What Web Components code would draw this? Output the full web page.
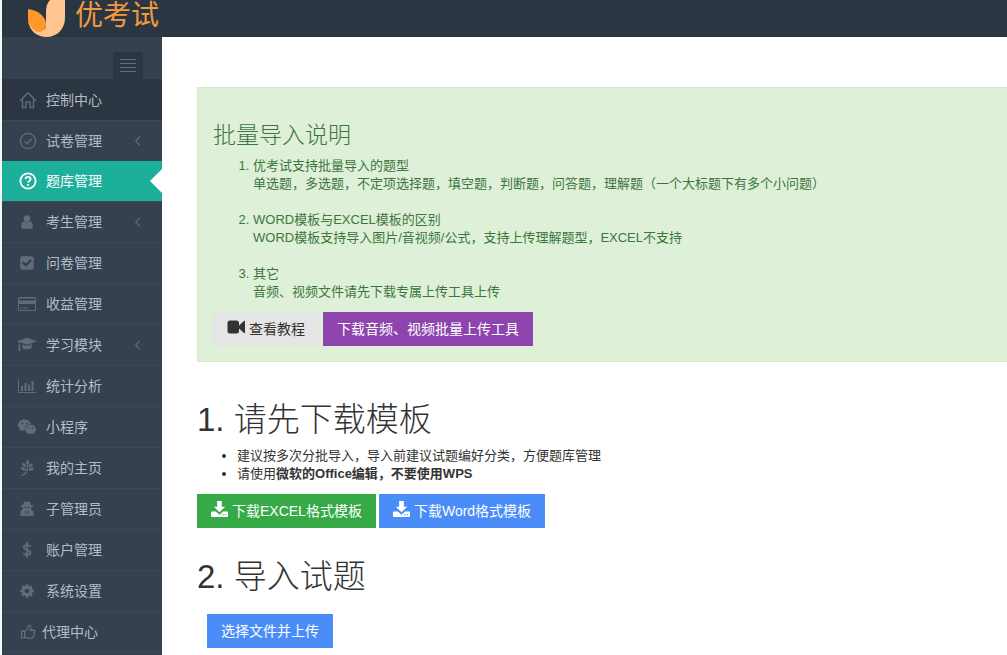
<!DOCTYPE html>
<html lang="zh-CN">
<head>
<meta charset="utf-8">
<meta name="viewport" content="width=device-width, initial-scale=1">
<title>优考试 - 题库管理</title>
<style>
body { margin: 0; font: 13px/18px "Liberation Sans", "Noto Sans CJK SC", sans-serif; color: #333; background: #fff; }
</style>
</head>
<body>
<exam-app></exam-app>
<script>
const fa = d => `<svg viewBox="0 0 1792 1792" fill="currentColor"><path d="${d}"/></svg>`;
const line = (b, w = 1) => `<svg viewBox="0 0 18 18" fill="none" stroke="currentColor" stroke-width="${w}">${b}</svg>`;
const solid = b => `<svg viewBox="0 0 18 18" fill="currentColor">${b}</svg>`;
const ICONS = {
  home: line('<path d="M1 10 9 1.800l8 8.200M3.500 8.500v8h3.500V11h4v5.500h3.500v-8"/>', 1.4),
  check: line('<circle cx="9" cy="9" r="7.600"/><path d="m5.500 9.300 2.700 2.500 4.500-5"/>', 1.4),
  question: line('<circle cx="9" cy="9" r="7.600"/><path d="M6.500 7.200C6.700 5.500 7.700 4.900 9 4.900c1.500 0 2.600.8 2.600 2.100 0 1.900-2.500 1.900-2.500 3.700M9.100 11.900v1.800"/>', 1.8),
  user: fa("M1536 1399q0 109-62.5 187t-150.5 78h-854q-88 0-150.5-78t-62.5-187q0-85 8.5-160.5t31.5-152 58.5-131 94-89 134.5-34.5q131 128 313 128t313-128q76 0 134.5 34.5t94 89 58.500 131 31.5 152 8.5 160.5zm-256-887q0 159-112.5 271.500t-271.5 112.5-271.5-112.5-112.5-271.5 112.5-271.5 271.5-112.5 271.5 112.5 112.5 271.5z"),
  square: fa("M813 1299l614-614q19-19 19-45t-19-45l-102-102q-19-19-45-19t-45 19l-467 467-211-211q-19-19-45-19t-45 19l-102 102q-19 19-19 45t19 45l358 358q19 19 45 19t45-19zm851-883v960q0 119-84.5 203.5t-203.5 84.5h-960q-119 0-203.5-84.5t-84.5-203.5v-960q0-119 84.5-203.5t203.5-84.5h960q119 0 203.5 84.5t84.5 203.5z"),
  card: solid('<path fill-rule="evenodd" d="M1.500 2h15A1.500 1.500 0 0 1 18 3.500v11a1.500 1.500 0 0 1-1.500 1.500h-15A1.500 1.500 0 0 1 0 14.500v-11A1.500 1.500 0 0 1 1.500 2ZM1 3.500v2h16v-2ZM1 9v6h16V9ZM2.500 12.500h2v1h-2Zm3 0h4v1h-4Z"/>'),
  cap: solid('<path d="M9 1.700 19 5.200 9 8.700 2 6.300v3c.8.500.5 1.200 0 1.400l.7 4.200H.2l.7-4.200c-.6-.4-.6-1 0-1.400V5.900L-1 5.200Z"/><path d="m4.300 8.200 4.700 1.700 4.700-1.700v3.500c-1.400 2.200-8 2.200-9.400 0Z"/>'),
  chart: solid('<path d="M0 2h1v13h17v1H0ZM3 9h2v5H3ZM6.500 6h2v8h-2ZM10 7.500h2V14h-2ZM13.500 4h2v10h-2Z"/>'),
  wechat: solid('<path fill-rule="evenodd" d="M6.600 1.500C2.900 1.500 0 4 0 7c0 1.700.9 3.300 2.400 4.300l-.6 2.200 2.300-1.300c.9.200 1.700.4 2.600.3C6.100 8.900 9 6 12.900 6 12.300 3.500 9.700 1.500 6.600 1.500ZM4.300 4.500a.9.900 0 1 1 0 1.800.9.900 0 0 1 0-1.800Zm4.500 0a.9.900 0 1 1 0 1.800.9.900 0 0 1 0-1.800ZM12.700 6.700C9.700 6.700 7.300 8.800 7.300 11.500s2.400 4.400 5.400 4.400c.7 0 1.300-.1 1.900-.3l1.900 1-.5-1.600c1.200-.9 2-2.100 2-3.500C18 8.800 15.600 6.700 12.700 6.700ZM11 9.300a.7.700 0 1 1 0 1.400.7.700 0 0 1 0-1.400Zm3.500 0a.7.700 0 1 1 0 1.400.7.700 0 0 1 0-1.400Z"/>'),
  leaf: solid('<path d="M9.500 0c2.600 1.500 2.700 4 .2 5.900C6.900 4.400 7.200 1.500 9.500 0ZM3.200 3.500c3.300.1 5 1.700 5.100 4.600-3.200.1-5-1.600-5.100-4.600ZM15.800 3.900c0 3-1.700 4.500-5.200 4.200.1-2.900 1.900-4.200 5.200-4.200ZM1.800 8.500c3.400-.8 5.500.3 6.500 2.900-3 1.300-5.400.3-6.500-2.900ZM16.900 9c-1.300 2.800-3.500 3.700-6.400 2.400C11.700 8.600 13.900 8 16.900 9Z"/><path d="M8.900 5h1.300c.2 6-.5 12-7.700 13v-1.500c6-1.300 6.600-6 6.400-11.500Z"/>'),
  secret: solid('<path fill-rule="evenodd" d="M5.700.7C7 0 8 1.200 9 1.200S11 0 12.300.7L13.400 4.300l2.900.9v1l-2.400.5c.1 1.200-.1 1.900-.7 2.600 2.300.7 3.400 2.700 3.400 5.600 0 1.300-.8 2.100-2 2.100H3.400c-1.200 0-2-.8-2-2.100 0-2.900 1.100-4.900 3.400-5.600-.6-.7-.8-1.400-.7-2.600l-2.400-.5v-1l2.900-.9ZM5.700 7c.2 1.500 2.500 1.500 3.300.3.800 1.200 3.100 1.200 3.300-.3ZM6.400 10.500l1.300 5L8.300 12.300ZM11.600 10.500l-1.900 1.800.6 3.200Z"/>'),
  dollar: line('<path d="M13 5.300c-1-1.100-2.300-1.700-4-1.700C6.900 3.600 5.300 4.500 5.300 6c0 3.600 7.600 2 7.600 5.900 0 1.500-1.500 2.600-3.700 2.600-1.800 0-3.200-.6-4.300-1.800M9 0v18"/>', 2),
  cog: fa("M1152 896q0-106-75-181t-181-75-181 75-75 181 75 181 181 75 181-75 75-181zm512-109v222q0 12-8 23t-20 13l-185 28q-19 54-39 91 35 50 107 138 10 12 10 25t-9 23q-27 37-99 108t-94 71q-12 0-26-9l-138-108q-44 23-91 38-16 136-29 186-7 28-36 28h-222q-14 0-24.5-8.5t-11.5-21.5l-28-184q-49-16-90-37l-141 107q-10 9-25 9-14 0-25-11-126-114-165-168-7-10-7-23 0-12 8-23 15-21 51-66.5t54-70.5q-27-50-41-99l-183-27q-13-2-21-12.5t-8-23.5v-222q0-12 8-23t19-13l186-28q14-46 39-92-40-57-107-138-10-12-10-24 0-10 9-23 26-36 98.5-107.5t94.5-71.5q13 0 26 10l138 107q44-23 91-38 16-136 29-186 7-28 36-28h222q14 0 24.5 8.5t11.5 21.5l28 184q49 16 90 37l142-107q9-9 24-9 13 0 25 10 129 119 165 170 7 8 7 22 0 12-8 23-15 21-51 66.5t-54 70.5q26 50 41 98l183 28q13 2 21 12.5t8 23.5z"),
  like: line('<path d="M1.800 8.200h3.500v7.500H1.800ZM5.300 8.700C7 8 7.200 6 8.700 5c.7-.8.4-3.400 1.300-3.700 1.800 0 2.500 1.500 2.100 3l-.7 2.700h3.800c1.600.1 1.800 1.800.8 2.600.7.900.5 1.800-.3 2.300.3.900 0 1.500-.6 2 .1 1.300-.7 2.300-2 2.300-3.100 0-4.600-.4-7.800-1.200"/>', 1.5),
  back: line('<path d="m11 4-4.500 5 4.500 5"/>', 1.4),
  video: solid('<path d="M3 2.500h6.500A2.500 2.500 0 0 1 12 5v2.500L17 3c.5-.4 1-.2 1 .4v11.200c0 .6-.5.800-1 .4l-5-4.500V13a2.500 2.500 0 0 1-2.500 2.500H3A2.500 2.500 0 0 1 .5 13V5A2.500 2.500 0 0 1 3 2.500Z"/>'),
  download: solid('<path fill-rule="evenodd" d="M6.500 0h5v6H15l-6 6-6-6h3.500ZM.7 11h4.500L9 14.500l3.800-3.500h4.500l.7.700v4.600l-.7.700H.7l-.7-.7v-4.600ZM12 14v1h1.300v-1Zm2.700 0v1H16v-1Z"/>'),
  bars: line('<path d="M1 2.500h16M1 6.500h16M1 10.500h16M1 14.500h16"/>')
};

function define(name, render) {
  customElements.define(name, class extends HTMLElement {
    connectedCallback() {
      if (this.shadowRoot) return;
      const t = document.createElement('template');
      t.innerHTML = render(this);
      this.attachShadow({ mode: 'open' }).append(t.content.cloneNode(true));
    }
  });
}

define('exam-icon', el => `
<style>:host { display: block; flex: none; width: 18px; height: 18px; } svg { display: block; width: 100%; height: 100%; overflow: visible; }</style>
${ICONS[el.getAttribute('name')]}`);

define('exam-header', () => `
<style>
:host { display: block; height: 37px; background: #2b3643; }
a { display: flex; gap: 9px; padding-left: 26px; color: #f19a3e; text-decoration: none; font-size: 28px; line-height: 32px; }
svg { display: block; width: 38px; height: 37px; }
</style>
<a href="#"><svg viewBox="0 0 38 37" aria-hidden="true"><path fill="#ffc490" d="M22 0h15v18C37 29 29 37 18.500 37 10 37 2 32 0 21l16 9c2-2 2-4 2-7V12c0-5 1-9 4-12Z"/><path fill="#ff9829" d="M0 9c10 1 18 8 18 15 0 5-3 8-8 8C4 30 0 24 0 18Z"/></svg><span>优考试</span></a>`);

define('exam-nav-item', el => `
<style>
:host { display: block; border-top: 1px solid #3d4957; }
:host([first]) { border-top-color: #2c3542; background: #2c3542; }
:host([active]) { border-top: 0; background: #1caf9a; }
a { position: relative; display: flex; align-items: center; height: 40px; padding: 0 16px; color: #b4bcc8; font-size: 14px; text-decoration: none; }
.lead { width: 18px; height: 18px; margin-right: 10px; color: #606c7d; }
.lead.wide { margin: 0 9px 0 1px; }
.lead.mid { width: 16px; height: 16px; margin: 0 11px 0 1px; }
:host([tight]) .lead.mid { margin: 0 6px 0 2px; }
.more { width: 16px; height: 16px; margin-left: auto; color: #606c7d; }
:host([active]) a, :host([active]) .lead { color: #fff; }
:host([active]) a::after { content: ""; position: absolute; right: 0; top: 8px; width: 12px; height: 24px; background: #fff; clip-path: polygon(100% 0, 0 50%, 100% 100%); }
</style>
<a href="#"${el.hasAttribute('active') ? ' aria-current="page"' : ''}><exam-icon class="lead ${/^(home|check|question)$/.test(el.getAttribute('icon')) ? 'wide' : /^(card|cap|chart|wechat)$/.test(el.getAttribute('icon')) ? '' : 'mid'}" name="${el.getAttribute('icon')}"></exam-icon><slot></slot>${el.hasAttribute('more') ? '<exam-icon class="more" name="back"></exam-icon>' : ''}</a>`);

define('exam-sidebar', () => `
<style>
:host { display: block; background: #364150; }
.top { display: flex; justify-content: flex-end; padding: 15px 19px 0 0; }
button { display: grid; place-items: center; width: 30px; height: 27px; padding: 0; border: 0; background: #2b3643; color: #606c7d; }
nav { border-bottom: 1px solid #3d4957; }
</style>
<div class="top"><button type="button" aria-label="切换菜单"><exam-icon name="bars"></exam-icon></button></div>
<nav>
<exam-nav-item icon="home" first>控制中心</exam-nav-item>
<exam-nav-item icon="check" more>试卷管理</exam-nav-item>
<exam-nav-item icon="question" active>题库管理</exam-nav-item>
<exam-nav-item icon="user" more>考生管理</exam-nav-item>
<exam-nav-item icon="square">问卷管理</exam-nav-item>
<exam-nav-item icon="card">收益管理</exam-nav-item>
<exam-nav-item icon="cap" more>学习模块</exam-nav-item>
<exam-nav-item icon="chart">统计分析</exam-nav-item>
<exam-nav-item icon="wechat">小程序</exam-nav-item>
<exam-nav-item icon="leaf">我的主页</exam-nav-item>
<exam-nav-item icon="secret">子管理员</exam-nav-item>
<exam-nav-item icon="dollar">账户管理</exam-nav-item>
<exam-nav-item icon="cog">系统设置</exam-nav-item>
<exam-nav-item icon="like" tight>代理中心</exam-nav-item>
</nav>`);

define('exam-button', el => `
<style>
:host { display: block; }
button { display: flex; align-items: center; gap: 4px; height: 34px; padding: 0 14px; border: 0; background: #4b8df8; color: #fff; font: inherit; font-size: 14px; white-space: nowrap; }
:host([kind=gray]) button { background: #e5e5e5; color: #333; }
:host([kind=purple]) button { background: #8e44ad; }
:host([kind=green]) button { background: #35aa47; }
exam-icon { width: 17px; height: 17px; margin-bottom: 4px; }
:host([kind=gray]) exam-icon { width: 18px; height: 18px; }
</style>
<button type="button">${el.hasAttribute('icon') ? `<exam-icon name="${el.getAttribute('icon')}"></exam-icon>` : ''}<span><slot></slot></span></button>`);

define('exam-guide', () => `
<style>
:host { display: block; padding: 35px 15px 15px; border: 1px solid #d6e9c6; border-right: 0; background: #dff0d8; color: #3c763d; }
h3 { margin: 0 0 10px; font-size: 23px; line-height: 24px; font-weight: 300; }
ol { display: grid; gap: 18px; margin: 0 0 11px; padding-left: 40px; }
p { margin: 0; }
.actions { display: flex; gap: 4px; }
</style>
<h3>批量导入说明</h3>
<ol>
<li>优考试支持批量导入的题型<p>单选题，多选题，不定项选择题，填空题，判断题，问答题，理解题（一个大标题下有多个小问题）</p></li>
<li>WORD模板与EXCEL模板的区别<p>WORD模板支持导入图片/音视频/公式，支持上传理解题型，EXCEL不支持</p></li>
<li>其它<p>音频、视频文件请先下载专属上传工具上传</p></li>
</ol>
<div class="actions"><exam-button kind="gray" icon="video">查看教程</exam-button><exam-button kind="purple">下载音频、视频批量上传工具</exam-button></div>`);

define('exam-step', el => `
<style>
:host { display: block; }
h1 { margin: 0 0 9px; font-size: 33px; line-height: 36px; font-weight: 300; }
</style>
<h1>${el.getAttribute('heading')}</h1><slot></slot>`);

define('exam-import', () => `
<style>
:host { display: block; padding: 50px 0 7px 35px; min-width: 0; }
exam-step { margin-top: 40px; }
exam-step + exam-step { margin-top: 31px; }
ul { margin: 0 0 11px; padding-left: 40px; }
.actions { display: flex; gap: 3px; }
.upload { padding: 10px 10px 0; }
</style>
<exam-guide></exam-guide>
<exam-step heading="1. 请先下载模板">
<ul><li>建议按多次分批导入，导入前建议试题编好分类，方便题库管理</li><li>请使用<b>微软的Office编辑，不要使用WPS</b></li></ul>
<div class="actions"><exam-button kind="green" icon="download">下载EXCEL格式模板</exam-button><exam-button icon="download">下载Word格式模板</exam-button></div>
</exam-step>
<exam-step heading="2. 导入试题"><div class="actions upload"><exam-button>选择文件并上传</exam-button></div></exam-step>`);

define('exam-app', () => `
<style>
:host { display: grid; grid-template: auto 1fr / 160px 1fr; min-height: 100vh; box-sizing: border-box; border-left: 2px solid #f4f7f7; }
exam-header { grid-column: 1 / -1; }
</style>
<exam-header></exam-header><exam-sidebar></exam-sidebar><exam-import role="main"></exam-import>`);
</script>
</body>
</html>
